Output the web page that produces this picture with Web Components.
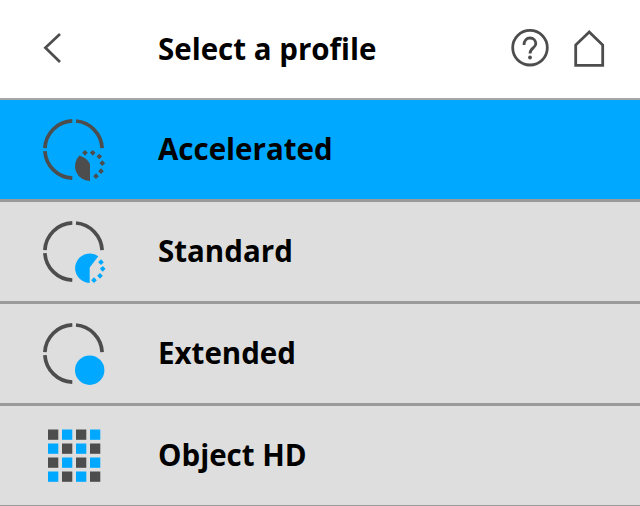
<!DOCTYPE html>
<html>
<head>
<meta charset="utf-8">
<title>Select a profile</title>
<style>
  html, body { margin: 0; padding: 0; background: #fff; }
  body { width: 640px; height: 506px; overflow: hidden; font-family: "Open Sans", sans-serif; }
</style>
</head>
<body>
<profile-screen>
  <profile-header slot="header">Select a profile</profile-header>
  <profile-row active icon="accelerated">Accelerated</profile-row>
  <profile-row icon="standard">Standard</profile-row>
  <profile-row icon="extended">Extended</profile-row>
  <profile-row icon="object">Object HD</profile-row>
</profile-screen>

<script>
const DARK = '#4d4d4d';
const BLUE = '#00a8ff';

const ARCS = `
  <g fill="none" stroke="${DARK}" stroke-width="3.7">
    <path d="M34.3 6.9A28.6 28.6 0 0 0 6.9 34.2"/>
    <path d="M38 7A28.6 28.6 0 0 1 64.1 34.2"/>
    <path d="M6.9 37.2A28.6 28.6 0 0 0 34.3 64.1"/>
  </g>`;

function dots(list, fill) {
  return list.map(([x, y]) =>
    `<rect x="${x - 2}" y="${y - 2}" width="4" height="4" fill="${fill}" transform="rotate(45 ${x} ${y})"/>`).join('');
}

function squares() {
  let out = '';
  for (let i = 0; i < 16; i++) {
    const col = i % 4, row = i >> 2;
    const fill = (col + row) % 2 === 0 ? DARK : BLUE;
    out += `<rect x="${10 + col * 14}" y="${9.5 + row * 14}" width="10.3" height="10.3" fill="${fill}"/>`;
  }
  return out;
}

const ICONS = {
  accelerated: ARCS + `
    <path d="M41.5 41.6Q50 44.5 52 50.5V66.9A14.7 14.7 0 0 1 41.5 41.6Z" fill="${DARK}"/>
    ${dots([[47, 38.8], [54.7, 38.8], [61.3, 42.5], [64.3, 49.2], [63, 57.2], [58, 62.2]], DARK)}`,
  standard: ARCS + `
    <path d="M60.3 40.2L51.7 51.5V66.9A14.7 14.7 0 1 1 60.3 40.2Z" fill="${BLUE}"/>
    ${dots([[63, 46.2], [64.7, 52.8], [62, 59.8], [56, 64.2]], BLUE)}`,
  extended: ARCS + `<circle cx="51.7" cy="52.2" r="14.7" fill="${BLUE}"/>`,
  object: squares()
};

class ProfileIcon extends HTMLElement {
  connectedCallback() {
    this.attachShadow({ mode: 'open' });
    this.shadowRoot.innerHTML = `
      <style>
        :host { display: block; width: 72px; height: 72px; }
        svg { display: block; }
      </style>
      <svg width="72" height="72" viewBox="0 0 72 72">${ICONS[this.getAttribute('type')]}</svg>
    `;
  }
}

class ProfileHeader extends HTMLElement {
  connectedCallback() {
    this.attachShadow({ mode: 'open' });
    this.shadowRoot.innerHTML = `
      <style>
        :host { display: flex; align-items: center; height: 96px; padding: 0 34px 2px 38px; background: #fff; border-bottom: 2px solid #a6a6a6; }
        .back { display: block; margin-right: 88px; }
        .title { flex: 1; font: 700 29.5px "Open Sans", sans-serif; color: #000; }
        .help { display: block; margin-right: 22px; }
        .home { display: block; }
      </style>
      <svg class="back" width="32" height="40" viewBox="0 0 32 40" fill="none" stroke="${DARK}" stroke-width="2.7">
        <path d="M22 6L7.4 19.7L22 34"/>
      </svg>
      <div class="title"><slot></slot></div>
      <svg class="help" width="40" height="40" viewBox="0 0 40 40" fill="none" stroke="${DARK}" stroke-width="2.8">
        <circle cx="20" cy="19.7" r="17.3"/>
        <path d="M14 17C14 12.5 16.5 10 20 10C23.5 10 25.8 12.5 25.8 15.8C25.8 20 20 20 20 25.5"/>
        <circle cx="20" cy="29.5" r="1.9" fill="${DARK}" stroke="none"/>
      </svg>
      <svg class="home" width="34" height="40" viewBox="0 0 34 40" fill="none" stroke="${DARK}" stroke-width="2.8">
        <path d="M17.2 4L3.7 17V37.3H30.7V17Z"/>
      </svg>
    `;
  }
}

class ProfileRow extends HTMLElement {
  connectedCallback() {
    this.attachShadow({ mode: 'open' });
    this.shadowRoot.innerHTML = `
      <style>
        :host { display: flex; align-items: center; height: 99px; padding-left: 38px; background: #dedede; border-bottom: 3px solid #9a9a9a; }
        :host([active]) { background: ${BLUE}; }
        profile-icon { margin-right: 48px; }
        .label { margin-bottom: 2px; font: 700 29.5px "Open Sans", sans-serif; color: #000; }
      </style>
      <profile-icon type="${this.getAttribute('icon')}"></profile-icon>
      <div class="label"><slot></slot></div>
    `;
  }
}

class ProfileScreen extends HTMLElement {
  connectedCallback() {
    this.attachShadow({ mode: 'open' });
    this.shadowRoot.innerHTML = `
      <style>
        :host { display: block; width: 640px; }
      </style>
      <slot name="header"></slot>
      <slot></slot>
    `;
  }
}

customElements.define('profile-icon', ProfileIcon);
customElements.define('profile-header', ProfileHeader);
customElements.define('profile-row', ProfileRow);
customElements.define('profile-screen', ProfileScreen);
</script>
</body>
</html>
